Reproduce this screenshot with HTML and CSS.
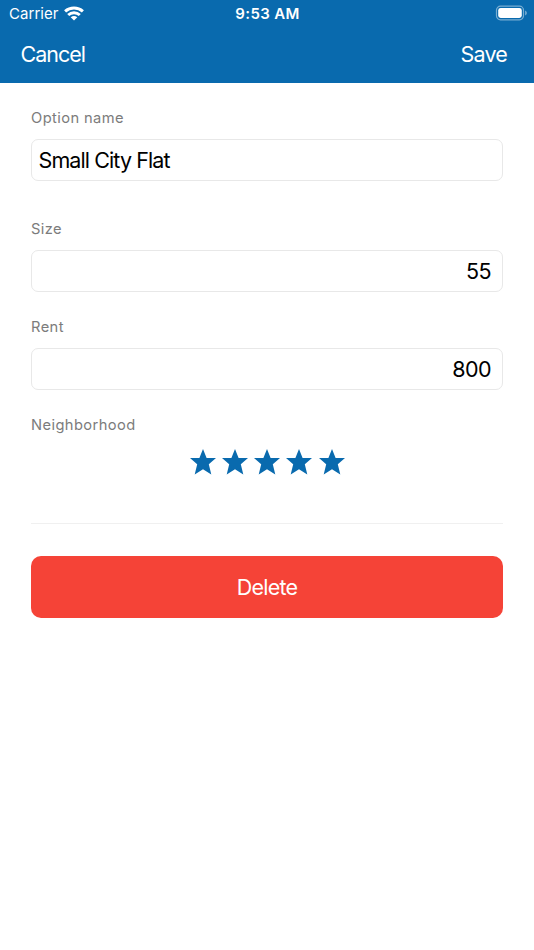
FILE: index.html
```html
<!DOCTYPE html>
<html lang="en">
<head>
<meta charset="utf-8">
<title>Edit option</title>
<link rel="stylesheet" href="styles.css">
</head>
<body>
<header class="header">
  <div class="status">
    <div class="carrier"><span class="carrier-name">Carrier</span>
      <svg class="wifi" viewBox="0 0 20 15" width="20" height="15"><g fill="none" stroke="#fff" stroke-width="3"><path d="M1.1 5.4C6.1.9 13.9.9 18.9 5.4"/><path d="M4.2 9C7.5 6 12.5 6 15.8 9"/></g><path fill="#fff" d="M6.7 11.2q3.3-2.5 6.6 0L10 14.6z"/></svg>
    </div>
    <div class="time">9:53 AM</div>
    <svg class="battery" viewBox="0 0 32 16" width="32" height="16"><rect x="1.5" y="1.2" width="27" height="13.6" rx="4" fill="none" stroke="#fff" stroke-opacity=".45" stroke-width="1.2"/><rect x="3.2" y="3" width="23.6" height="10" rx="2.4" fill="#fff"/><path d="M30.2 5.6q1.6.8 1.6 2.4t-1.6 2.4z" fill="#fff" fill-opacity=".5"/></svg>
  </div>
  <nav class="nav"><span class="cancel">Cancel</span><span class="save">Save</span></nav>
</header>
<main class="form">
  <div class="field field-name"><div class="label">Option name</div><div class="input"><span class="name-text">Small City Flat</span></div></div>
  <div class="field"><div class="label label-size">Size</div><div class="input number">55</div></div>
  <div class="field"><div class="label label-rent">Rent</div><div class="input number">800</div></div>
  <div class="rating"><div class="label label-area">Neighborhood</div>
    <div class="stars">
      <svg class="star" viewBox="0 0 26 26"><path d="M13 0l3.6 9H26l-7.2 6.3L21.3 25.6 13 20.2 4.7 25.6 7.2 15.3 0 9h9.4z"/></svg>
      <svg class="star" viewBox="0 0 26 26"><path d="M13 0l3.6 9H26l-7.2 6.3L21.3 25.6 13 20.2 4.7 25.6 7.2 15.3 0 9h9.4z"/></svg>
      <svg class="star" viewBox="0 0 26 26"><path d="M13 0l3.6 9H26l-7.2 6.3L21.3 25.6 13 20.2 4.7 25.6 7.2 15.3 0 9h9.4z"/></svg>
      <svg class="star" viewBox="0 0 26 26"><path d="M13 0l3.6 9H26l-7.2 6.3L21.3 25.6 13 20.2 4.7 25.6 7.2 15.3 0 9h9.4z"/></svg>
      <svg class="star" viewBox="0 0 26 26"><path d="M13 0l3.6 9H26l-7.2 6.3L21.3 25.6 13 20.2 4.7 25.6 7.2 15.3 0 9h9.4z"/></svg>
    </div>
  </div>
  <div class="delete"><span class="delete-text">Delete</span></div>
</main>
</body>
</html>
```
FILE: styles.css
```css
* { box-sizing: border-box; }
body { margin: 0; height: 950px; background: #fff; color: #000; font-family: Inter, "Liberation Sans", sans-serif; }
.header { height: 83px; background: #096aae; color: #fff; }
.status { height: 27px; display: grid; grid-template-columns: 1fr auto 1fr; align-items: center; padding: 0 7px 0 9px; font-size: 15px; line-height: 20px; }
.carrier { display: flex; align-items: center; gap: 6px; letter-spacing: .05px; padding-top: 1px; }
.wifi { margin-top: -2px; margin-left: -1px; }
.time { font-weight: 600; letter-spacing: .35px; padding-top: 1px; margin-right: 1px; }
.battery { justify-self: end; margin-top: -1px; }
.nav { height: 56px; display: flex; justify-content: space-between; align-items: center; padding: 0 27px 2px 20.5px; font-size: 21.5px; letter-spacing: -1px; }
.save { letter-spacing: -.8px; }
.form { padding: 25px 31px 0; }
.field { height: 98px; }
.field-name { height: 111px; }
.label { height: 20px; line-height: 20px; font-size: 14.7px; letter-spacing: .4px; color: #7c7c7c; }
.input { margin-top: 11px; height: 42px; border: 1px solid #e8e8e8; border-radius: 7px; padding: 0 6.5px; font-size: 21.5px; line-height: 41px; letter-spacing: -.6px; }
.name-text { letter-spacing: -.9px; }
.number { text-align: right; padding-right: 11px; }
.rating { height: 109px; border-bottom: 1px solid #f0f0f0; }
.stars { display: flex; justify-content: center; gap: 6.25px; margin-top: 14px; }
.star { width: 26px; height: 26px; fill: #096aae; }
.delete { margin-top: 32px; height: 62px; border-radius: 10px; background: #f54337; color: #fff; text-align: center; font-size: 21.5px; line-height: 62px; letter-spacing: -.75px; }
```
